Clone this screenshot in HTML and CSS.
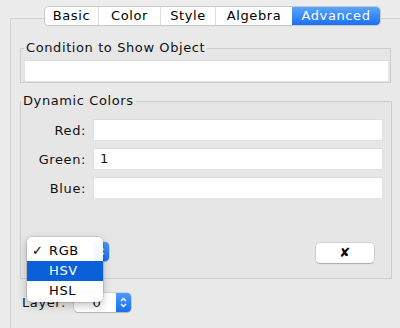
FILE: index.html
```html
<!DOCTYPE html>
<html>
<head>
<meta charset="utf-8">
<link rel="stylesheet" href="styles.css">
</head>
<body>
<div class="tabs">
  <div class="tab t-basic">Basic</div>
  <div class="tab t-color">Color</div>
  <div class="tab t-style">Style</div>
  <div class="tab t-algebra">Algebra</div>
  <div class="tab t-adv active">Advanced</div>
</div>
<div class="panel">
  <fieldset class="box cond">
    <legend>Condition to Show Object</legend>
    <div class="field wide"></div>
  </fieldset>
  <fieldset class="box dyn">
    <legend>Dynamic Colors</legend>
    <div class="rows">
      <div class="row"><span class="lbl">Red:</span><div class="field"></div></div>
      <div class="row"><span class="lbl">Green:</span><div class="field">1</div></div>
      <div class="row"><span class="lbl">Blue:</span><div class="field"></div></div>
    </div>
    <div class="controls">
      <div class="combo rgb"><span class="val">RGB</span><span class="stepper"><svg width="7" height="11" viewBox="0 0 7 11"><path d="M1 4 L3.5 1.5 L6 4 M1 7 L3.5 9.5 L6 7" fill="none" stroke="#fff" stroke-width="1.3"/></svg></span></div>
      <div class="btn">✘</div>
    </div>
  </fieldset>
  <div class="layer">
    <span class="layer-lbl">Layer:</span>
    <div class="combo small"><span class="val">0</span><span class="stepper"><svg width="7" height="11" viewBox="0 0 7 11"><path d="M1 4 L3.5 1.5 L6 4 M1 7 L3.5 9.5 L6 7" fill="none" stroke="#fff" stroke-width="1.3"/></svg></span></div>
  </div>
</div>
<div class="menu">
  <div class="item"><span class="check">✓</span>RGB</div>
  <div class="item sel"><span class="check"></span>HSV</div>
  <div class="item"><span class="check"></span>HSL</div>
</div>
</body>
</html>
```
FILE: styles.css
```css
html, body {
  margin: 0;
  padding: 0;
}
body {
  background: #ececec;
  font-family: "DejaVu Sans", sans-serif;
  font-size: 13px;
  letter-spacing: 0.6px;
  color: #111;
  width: 400px;
  height: 328px;
  overflow: hidden;
  position: relative;
}
.tabs {
  display: flex;
  margin: 7px 0 0 45px;
  height: 18px;
  position: relative;
  z-index: 1;
  width: 335px;
  border-radius: 4px;
  box-shadow: 0 0 0 1px #c9c9c9, 0 1px 1px rgba(0,0,0,0.12);
  background: #fff;
}
.tab {
  height: 18px;
  line-height: 18px;
  text-align: center;
  border-left: 1px solid #dcdcdc;
  box-sizing: border-box;
  color: #000;
}
.tab:first-child { border-left: none; border-radius: 4px 0 0 4px; }
.t-basic { width: 53px; }
.t-color { width: 62px; }
.t-style { width: 55px; }
.t-algebra { width: 77px; }
.t-adv { width: 88px; }
.tab.active {
  background: linear-gradient(#5aa5fb, #1b70f2);
  color: #fff;
  border-left: none;
  border-radius: 0 4px 4px 0;
}
.panel {
  margin: -7px -10px 0 10px;
  border: 1px solid #d2d2d2;
  border-bottom: none;
  background: #e9e9e9;
  height: 310px;
  padding: 21px 0 0 9px;
  box-sizing: border-box;
}
.box {
  margin: 0;
  border: 1px solid #cdcdcd;
  background: #e6e6e6;
  box-sizing: border-box;
  min-width: 0;
}
.box legend {
  padding: 0 2px;
  line-height: 16px;
  height: 16px;
}
.cond {
  width: 371px;
  padding: 4px 1px 0 3px;
}
.field {
  background: #fff;
  height: 22px;
  line-height: 22px;
  box-shadow: inset 0 1px 0 #dcdcdc, inset 0 0 0 1px #e2e2e2;
  box-sizing: border-box;
  padding-left: 7px;
}
.dyn {
  width: 372px;
  margin-top: 10px;
  padding: 10px 8px 15px 0;
}
.rows {
  display: flex;
  flex-direction: column;
  gap: 7px;
}
.row {
  display: flex;
  align-items: center;
  gap: 7px;
}
.lbl {
  width: 65px;
  text-align: right;
}
.row .field { flex: 1; }
.controls {
  display: flex;
  justify-content: space-between;
  align-items: flex-start;
  margin-top: 43px;
  padding: 0 9px 0 8px;
}
.combo {
  display: flex;
  height: 19px;
  background: #fff;
  border-radius: 4px;
  box-shadow: 0 0 0 0.5px rgba(0,0,0,0.2), 0 1px 1px rgba(0,0,0,0.15);
  box-sizing: border-box;
}
.combo .val {
  flex: 1;
  line-height: 19px;
  text-align: center;
}
.combo .stepper {
  width: 15px;
  background: linear-gradient(#4a9bfa, #1a6ef0);
  border-radius: 0 4px 4px 0;
  display: flex;
  align-items: center;
  justify-content: center;
}
.rgb { width: 80px; }
.btn {
  width: 58px;
  height: 20px;
  margin-top: 1px;
  background: #fff;
  border-radius: 4px;
  box-shadow: 0 0 0 0.5px rgba(0,0,0,0.18), 0 1px 1px rgba(0,0,0,0.18);
  text-align: center;
  line-height: 20px;
  font-weight: bold;
  color: #000;
}
.layer {
  display: flex;
  align-items: center;
  margin: 14px 0 0 2px;
}
.layer-lbl { width: 52px; }
.small { width: 57px; }
.small .val { padding-left: 4px; }
.menu {
  position: absolute;
  left: 27px;
  top: 237px;
  width: 76px;
  padding: 4px 0 1px;
  background: rgba(255,255,255,0.94);
  border-radius: 5px;
  box-shadow: 0 0 0 0.5px rgba(0,0,0,0.2), 0 3px 9px rgba(0,0,0,0.25);
  z-index: 5;
}
.item {
  height: 20px;
  line-height: 20px;
  display: flex;
  color: #000;
}
.item .check {
  width: 16px;
  margin-left: 5px;
  margin-right: 1px;
  text-align: left;
  font-weight: bold;
}
.item.sel {
  background: #0a60d9;
  color: #fff;
}
```
